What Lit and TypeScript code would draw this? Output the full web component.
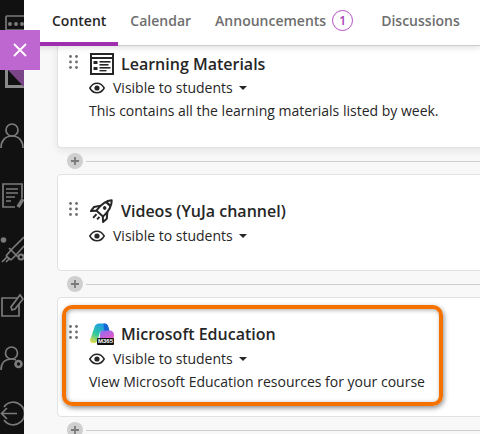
import { LitElement, html, css, svg } from "lit";
import { customElement } from "lit/decorators.js";

const eye = html`<svg class="eye" viewBox="0 0 16 12" width="16" height="12"><path d="M.8 6C2.6 2.9 5 1.2 8 1.2S13.4 2.9 15.2 6C13.4 9.1 11 10.8 8 10.8S2.6 9.1.8 6Z" fill="none" stroke="#262626" stroke-width="1.5"/><circle cx="8" cy="6" r="2.6" fill="#262626"/></svg>`;
const grip = html`<svg class="grip" viewBox="0 0 9 14" width="9" height="14"><g fill="#6e6e6e">${[1.5, 7, 12.5].map((y) => svg`<circle cx="1.5" cy=${y} r="1.4"/><circle cx="7.5" cy=${y} r="1.4"/>`)}</g></svg>`;
const caret = html`<span class="caret"></span>`;

const listIcon = html`<svg viewBox="0 0 24 22" width="24" height="22"><rect x="1" y="1" width="22" height="20" fill="none" stroke="#262626" stroke-width="2"/><path d="M1 5h22" stroke="#262626" stroke-width="2"/><g fill="#262626"><rect x="3.5" y="8" width="4" height="3"/><rect x="3.5" y="14" width="4" height="3"/><rect x="9.5" y="8" width="11" height="1.6"/><rect x="9.5" y="11" width="9" height="1.6"/><rect x="9.5" y="14" width="11" height="1.6"/><rect x="9.5" y="17" width="7" height="1.4"/></g></svg>`;
const rocket = html`<svg viewBox="0 0 24 24" width="24" height="24"><g transform="rotate(42 12 12)" fill="none" stroke="#262626" stroke-width="2" stroke-linejoin="round"><path d="M12 -2.500C16 1.500 17.200 7 16.500 15.500H7.500C6.800 7 8 1.500 12 -2.500Z"/><path d="M9.200 2.500H14.800" stroke-width="2.400"/><path d="M7.500 9 3.300 14.500 3.800 19.500 7.800 15.500M16.500 9 20.700 14.500 20.200 19.500 16.200 15.500"/><path d="M10 18v5M14 18v3.500"/><circle cx="12" cy="8" r="1.800" fill="#262626" stroke="none"/></g></svg>`;
const m365 = html`<svg viewBox="0 0 24 23" width="24" height="23"><defs><linearGradient id="a" x1=".6" y1="0" x2=".15" y2="1"><stop offset="0" stop-color="#1e9be8"/><stop offset=".55" stop-color="#2fc8a0"/><stop offset="1" stop-color="#e6dc45"/></linearGradient><linearGradient id="b" x1=".2" y1="0" x2=".8" y2="1"><stop offset="0" stop-color="#8f6cf0"/><stop offset=".6" stop-color="#d85cd0"/><stop offset="1" stop-color="#f56aa0"/></linearGradient></defs><path d="M9 .5h5.500c1.800 0 3 1 3.500 2.500l1.500 5H13c-1.800 0-3 1-3.500 2.700L7.800 17c-.5 1.800-1.800 3-3.800 3H2.800C.8 20-.3 18.300.2 16.400L4.500 4C5.200 1.800 6.800.5 9 .5Z" fill="url(#a)"/><path d="M13.500.5h1c1.800 0 3 1 3.500 2.500l1.600 5.500H14c-.4-3 0-6-.5-8Z" fill="#1566d6"/><path d="M13 7.500h6.500c2.800 0 4.500 1.700 4.500 4.500 0 1.500-.3 2.800-.8 4.200L21 20H9.500L10 11c.2-2 1.200-3.500 3-3.500Z" fill="url(#b)"/></svg>`;

@customElement("app-root")
export class AppRoot extends LitElement {
  static styles = css`
    :host { display: block; width: 480px; height: 434px; overflow: hidden; position: relative; font-family: "Open Sans", sans-serif; color: #262626; background: #f8f8f8; }
    .page { display: flex; height: 434px; }
    .side { width: 24px; flex: none; background: #111; overflow: hidden; display: flex; flex-direction: column; align-items: flex-start; padding-top: 15px; box-sizing: border-box; }
    .side svg { display: block; flex: none; }
    .side g { fill: none; stroke: #7b7b7b; stroke-width: 1.7; }
    .s1 { margin-left: 5px; }
    .s2 { margin-top: 35px; }
    .s3 { margin-top: 32px; }
    .s4 { margin-top: 33px; }
    .s5 { margin-top: 20px; }
    .s6 { margin-top: 30px; }
    .s7 { margin-top: 29px; }
    .s8 { margin-top: 30px; }
    .main { flex: 1; min-width: 0; display: flex; flex-direction: column; overflow: hidden; }
    .tabs { height: 46px; flex: none; box-sizing: border-box; background: #fff; border-bottom: 1px solid #cdcdcd; box-shadow: 0 2px 6px rgba(0,0,0,.12); display: flex; padding-left: 16px; position: relative; z-index: 1; font-size: 14px; font-weight: 600; color: #6e6e6e; }
    .tab { height: 45px; box-sizing: border-box; display: flex; align-items: center; gap: 6px; padding: 0 12px 5px; white-space: nowrap; }
    .tab.on { color: #262626; height: 46px; border-bottom: 4px solid #a02fb0; padding-bottom: 1px; }
    .tab.ann { padding-right: 16px; }
    .badge { width: 21px; height: 21px; box-sizing: border-box; border: 1.3px solid #b34cc4; border-radius: 50%; color: #a640b8; display: flex; align-items: center; justify-content: center; font-size: 12px; }
    .list { padding-left: 33px; display: flex; flex-direction: column; }
    .card { background: #fff; border: 1px solid #e2e2e2; border-radius: 4px 0 0 4px; margin-right: -6px; box-sizing: border-box; padding-left: 7px; }
    .c1 { height: 102px; border-top: none; border-radius: 0 0 0 4px; box-shadow: 0 3px 8px rgba(0,0,0,.08); padding-top: 6px; }
    .c1 .vis { margin-top: -1px; }
    .c2 { height: 97px; padding-top: 24px; }
    .c3 { height: 120px; padding-top: 24px; }
    .head { display: flex; align-items: center; height: 24px; margin-bottom: 1px; }
    .head .grip { margin-left: 4px; margin-right: 12px; margin-top: -4px; }
    .head .ico { width: 24px; margin-right: 7px; display: flex; position: relative; }
    .title { font-size: 16px; font-weight: 600; color: #262626; white-space: nowrap; }
    .vis { display: flex; align-items: center; height: 23px; padding-left: 24px; font-size: 14px; color: #262626; white-space: nowrap; }
    .vis .eye { margin-right: 8px; }
    .caret { width: 0; height: 0; margin-left: 6px; border-left: 4px solid transparent; border-right: 4px solid transparent; border-top: 4px solid #262626; }
    .desc { padding-left: 24px; font-size: 14px; line-height: 23px; color: #262626; white-space: nowrap; }
    .add { height: 26px; flex: none; display: flex; align-items: center; padding-left: 9px; gap: 3px; }
    .add .plus { width: 16px; height: 16px; border-radius: 50%; background: #cfcfcf; flex: none; display: flex; align-items: center; justify-content: center; margin-left: 1px; }
    .add .line { flex: 1; height: 1px; background: #cdcdcd; }
    .m { position: absolute; left: 7px; top: 15px; background: #111; color: #fff; font: 700 6px/7px "Liberation Sans", sans-serif; width: 17px; text-align: center; border-radius: 1px; }
    .close { position: absolute; left: 0; top: 30px; width: 40px; height: 40px; background: #bf67d0; display: flex; align-items: center; justify-content: center; z-index: 3; }
    .fold { position: absolute; left: 8px; top: 70px; width: 0; height: 0; border-top: 17px solid #7a4688; border-left: 16px solid transparent; z-index: 3; }
    .hl { position: absolute; left: 62px; top: 305px; width: 381px; height: 101px; box-sizing: border-box; border: 4px solid #f57200; border-radius: 10px; box-shadow: 1px 2px 5px rgba(0,0,0,.45), inset 1px 1px 4px rgba(0,0,0,.35); z-index: 2; pointer-events: none; }
  `;

  private addRow() {
    return html`<div class="add"><span class="plus"><svg viewBox="0 0 10 10" width="10" height="10"><path d="M5 1v8M1 5h8" stroke="#7a7a7a" stroke-width="1.800"/></svg></span><span class="line"></span></div>`;
  }

  render() {
    return html`
      <div class="page">
        <nav class="side">
          <svg class="s1" viewBox="0 0 24 16" width="24" height="16"><g><rect x="1" y="1" width="24" height="14" rx="1"/></g><circle cx="5" cy="9" r="2" fill="#7b7b7b"/><circle cx="11" cy="9" r="2" fill="#7b7b7b"/><circle cx="17" cy="9" r="2" fill="#7b7b7b"/></svg>
          <svg class="s2" viewBox="0 0 24 24" width="24" height="24"><path d="M6.500 0V20.500H24" fill="none" stroke="#8a8a8a" stroke-width="3"/></svg>
          <svg class="s3" viewBox="0 0 24 28" width="24" height="28"><g><circle cx="12" cy="8" r="6"/><path d="M1 26c0-7 4-12 11-12s11 5 11 12"/></g></svg>
          <svg class="s4" viewBox="0 0 24 25" width="24" height="25"><g><path d="M15 24H3V1h19v14"/><path d="M6 6h12M6 10h12M6 14h9M6 18h5" /><path d="M18 24l5-8" stroke-width="3.500"/></g></svg>
          <svg class="s5" viewBox="0 0 24 35" width="24" height="35"><g><path d="M6 28 11 22 24 9M11 32l5-5 8-9M6 28l5 4"/><path d="M9 20l9 9M2 34l5-5M6 34l3-3" /><circle cx="21" cy="29" r="2.500" stroke-width="2"/></g><circle cx="3.500" cy="12" r="2.800" fill="#7b7b7b"/></svg>
          <svg class="s6" viewBox="0 0 24 24" width="24" height="24"><g><path d="M17 5H2v18h17V11"/><path d="M11 14l1 3 3-1 8-10-3-4Z"/></g></svg>
          <svg class="s7" viewBox="0 0 24 25" width="24" height="25"><g><circle cx="11.500" cy="7" r="6"/><path d="M1 24c0-7 4-11 10.500-11 2 0 3.500.5 4.500 1"/><circle cx="18.500" cy="18" r="3" stroke-width="2.600"/></g></svg>
          <svg class="s8" viewBox="0 0 24 25" width="24" height="25"><g stroke-width="1.900"><path d="M4 6a11.300 11.300 0 1 1 0 13"/><path d="M17 12.500H1.500M7 7l-5.500 5.500L7 18"/></g></svg>
        </nav>
        <div class="main">
          <div class="tabs">
            <div class="tab on">Content</div>
            <div class="tab">Calendar</div>
            <div class="tab ann">Announcements <span class="badge">1</span></div>
            <div class="tab">Discussions</div>
          </div>
          <div class="list">
            <div class="card c1">
              <div class="head">${grip}<span class="ico">${listIcon}</span><span class="title">Learning Materials</span></div>
              <div class="vis">${eye}Visible to students ${caret}</div>
              <div class="desc">This contains all the learning materials listed by week.</div>
            </div>
            ${this.addRow()}
            <div class="card c2">
              <div class="head">${grip}<span class="ico">${rocket}</span><span class="title">Videos (YuJa channel)</span></div>
              <div class="vis">${eye}Visible to students ${caret}</div>
            </div>
            ${this.addRow()}
            <div class="card c3">
              <div class="head">${grip}<span class="ico">${m365}<span class="m">M365</span></span><span class="title">Microsoft Education</span></div>
              <div class="vis">${eye}Visible to students ${caret}</div>
              <div class="desc">View Microsoft Education resources for your course</div>
            </div>
            ${this.addRow()}
          </div>
        </div>
      </div>
      <div class="close"><svg viewBox="0 0 14 14" width="14" height="14"><path d="M1 1l12 12M13 1 1 13" stroke="#fff" stroke-width="1.800"/></svg></div>
      <div class="fold"></div>
      <div class="hl"></div>
    `;
  }
}
